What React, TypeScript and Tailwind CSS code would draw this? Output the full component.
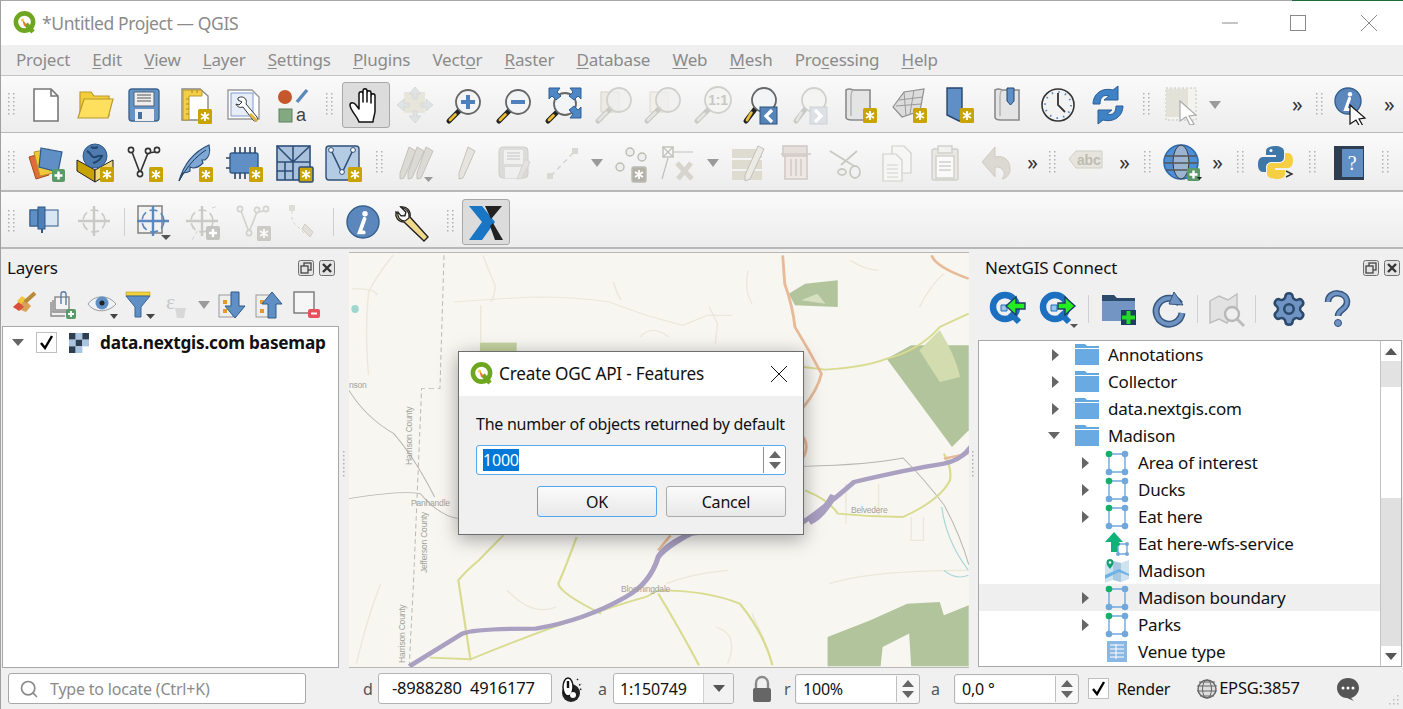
import React from "react";
import { Search, Settings } from "lucide-react";

const Svg = ({ children, w = 40, h = 40 }: { children: React.ReactNode; w?: number; h?: number }) => (
  <svg width={w} height={h} viewBox={`0 0 ${w} ${h}`} className="shrink-0">
    {children}
  </svg>
);

const Gold = ({ x = 23, y = 23, grey = false }: { x?: number; y?: number; grey?: boolean }) => (
  <g>
    <rect x={x} y={y} width={14} height={15} rx={1.5} fill={grey ? "#b4b2a8" : "#c9a400"} />
    <path d={`M${x + 7} ${y + 3}v9M${x + 3} ${y + 5}l8 5M${x + 3} ${y + 10}l8-5`} stroke="#fff" strokeWidth={1.8} />
  </g>
);

const Plus = ({ x = 25, y = 25 }: { x?: number; y?: number }) => (
  <g>
    <rect x={x} y={y} width={13} height={13} rx={2} fill="#5a9a68" />
    <path d={`M${x + 6.5} ${y + 2.5}v8M${x + 2.5} ${y + 6.5}h8`} stroke="#fff" strokeWidth={2.4} />
  </g>
);

const Lens = ({ cx = 24, cy = 17, r = 12, fill = "#f2f4f6", dim = false }: { cx?: number; cy?: number; r?: number; fill?: string; dim?: boolean }) => (
  <g>
    <path d={`M${cx - r * 0.72} ${cy + r * 0.72}L5 36`} stroke={dim ? "#c8c8c4" : "#222"} strokeWidth={5} strokeLinecap="round" />
    <path d={`M${cx - r * 1.05} ${cy + r * 1.05}L6 35`} stroke={dim ? "#e4e4e0" : "#eebf35"} strokeWidth={2.8} strokeLinecap="round" />
    <circle cx={cx} cy={cy} r={r} fill={fill} stroke={dim ? "#d0d0cc" : "#666"} strokeWidth={1.8} />
  </g>
);

const Scroll = () => (
  <g>
    <path d="M6 5c3-2 5-1 7 0h17v30H12c-3 0-6 0-6-3z" fill="#e4e4e4" stroke="#8a8a8a" strokeWidth={1.6} />
    <path d="M13 5c-2 2-2 4-2 6v20" stroke="#b0b0b0" fill="none" strokeWidth={1.4} />
  </g>
);

const QgisLogo = ({ s = 24 }: { s?: number }) => (
  <svg width={s} height={s} viewBox="0 0 24 24" className="shrink-0">
    <circle cx={11.5} cy={11} r={8.6} fill="none" stroke="#6fa61f" strokeWidth={4.6} />
    <path d="M13 13l7 8" stroke="#6fa61f" strokeWidth={4.6} />
    <path d="M9 8l5 6-3 1z" fill="#e8792d" />
    <circle cx={9.5} cy={9} r={1.6} fill="#f4d04a" />
  </svg>
);

const V = ({ c = "#333", dot = "#fff" }: { c?: string; dot?: string }) => (
  <g fill={dot} stroke={c} strokeWidth={1.6}>
    <path d="M7 9l8 21 8-20 7-1" fill="none" />
    <circle cx={6} cy={7} r={2.6} />
    <circle cx={15} cy={31} r={2.6} />
    <circle cx={23} cy={8} r={2.6} />
    <circle cx={32} cy={7} r={2.6} />
  </g>
);

const Cross = ({ c = "#c9c9c6" }: { c?: string }) => (
  <g fill="none" stroke={c}>
    <circle cx={20} cy={19} r={11} strokeWidth={1.6} strokeDasharray="8 4" />
    <path d="M20 4v30M4 19h32" strokeWidth={2.4} />
  </g>
);

const Pencil = ({ x = 0, c = "#dcdad4" }: { x?: number; c?: string }) => (
  <g transform={`translate(${x} 0)`}>
    <path d="M21 4l7 4-12 27-4 1 0-6z" fill={c} stroke="#c4c2bc" />
  </g>
);

const Info = ({ cx = 20, cy = 20, r = 15 }: { cx?: number; cy?: number; r?: number }) => (
  <g>
    <circle cx={cx} cy={cy} r={r} fill="#5c87bd" stroke="#35608f" strokeWidth={1.4} />
    <circle cx={cx + 2} cy={cy - r * 0.52} r={r * 0.17} fill="#fff" />
    <path d={`M${cx + 1.5} ${cy - r * 0.2}l-${r * 0.3} ${r * 0.85}h${r * 0.25}`} stroke="#fff" strokeWidth={r * 0.24} fill="none" strokeLinecap="round" />
  </g>
);

const Wrench = () => (
  <g>
    <path d="M8 5l5 5-1 4-4 0-5-4c-1 5 2 10 8 10l20 19 4-4-18-20c1-6-3-11-9-10z" fill="#f0d98c" stroke="#222" strokeWidth={1.4} />
    <path d="M5 10c-1 5 2 9 7 9l4-3c1-6-3-10-8-11l5 5-1 4-4 0z" fill="#fff" stroke="#222" strokeWidth={1.2} />
  </g>
);

const icons: Record<string, React.ReactNode> = {
  new: <path d="M8 4h17l7 7v25H8z M25 4v7h7" fill="#fff" stroke="#777" strokeWidth={1.6} />,
  open: (
    <g stroke="#b89b2e" strokeWidth={1.2}>
      <path d="M5 7h11l3 4h15v20H5z" fill="#f4cd3c" />
      <path d="M9 14h29l-5 19H3z" fill="#ffdf5e" />
    </g>
  ),
  save: (
    <g>
      <rect x={5} y={4} width={30} height={32} rx={3} fill="#6593c5" stroke="#3d668f" strokeWidth={1.4} />
      <rect x={10} y={7} width={20} height={14} fill="#eee" stroke="#567" />
      <path d="M13 10h14M13 13h14M13 16h14" stroke="#555" />
      <rect x={11} y={24} width={19} height={12} fill="#eee" />
      <rect x={14} y={27} width={4} height={7} fill="#446f9c" />
    </g>
  ),
  layout: (
    <g>
      <path d="M8 4h18l8 7v24H8z" fill="#fff" stroke="#888" strokeWidth={1.4} />
      <path d="M9 5h19v6H15v24H9z" fill="#f4cf45" stroke="#b8982a" />
      <path d="M12 14h3M12 19h3M12 24h3M12 29h3M18 5v3M23 5v3" stroke="#a88a20" />
      <Gold x={24} y={24} />
    </g>
  ),
  manager: (
    <g>
      <path d="M5 5h24l7 7v22H5z" fill="#fff" stroke="#999" strokeWidth={1.4} />
      <rect x={8} y={8} width={22} height={23} fill="#e8eef8" stroke="#7e9ccc" />
      <path d="M15 13c3-2 7-1 8 2 1 2 0 3 0 4l11 13c2 4-2 5-4 3L20 22c-3 1-6 0-7-3l3 1 3-3-4-2z" fill="#fff" stroke="#333" />
      <path d="M27 29l7 7" stroke="#e0b43a" strokeWidth={3} />
    </g>
  ),
  style: (
    <g>
      <circle cx={13} cy={12} r={7} fill="#c6562c" />
      <path d="M25 17L35 5" stroke="#5b87ba" strokeWidth={3.4} />
      <rect x={7} y={24} width={13} height={13} fill="#82a982" stroke="#5d825d" />
      <text x={24} y={36} fontSize={18} fontFamily="'Liberation Sans', sans-serif" fill="#444">a</text>
    </g>
  ),
  move: (
    <g>
      <rect x={9} y={7} width={21} height={21} fill="#e8e6da" />
      <g fill="#dfe3e3" stroke="#d2d6d6" strokeWidth={0.8}>
        <path d="M20 2l6 7h-4v5h-4V9h-4z" />
        <path d="M20 38l6-7h-4v-5h-4v5h-4z" />
        <path d="M2 20l7-6v4h5v4H9v4z" />
        <path d="M38 20l-7-6v4h-5v4h5v4z" />
      </g>
    </g>
  ),
  zin: (
    <g>
      <Lens />
      <path d="M24 10v14M17 17h14" stroke="#4d80bc" strokeWidth={4} />
    </g>
  ),
  zout: (
    <g>
      <Lens />
      <path d="M17 17h14" stroke="#4d80bc" strokeWidth={4} />
    </g>
  ),
  zfull: (
    <g>
      <Lens cx={22} cy={19} r={11} />
      <g fill="#4f86c4" stroke="#2d5f97">
        <path d="M6 3h11l-3 4 4 4-5 4-4-4-3 3z" />
        <path d="M38 3H27l3 4-4 4 5 4 4-4 3 3z" />
        <path d="M38 33H27l3-4-4-4 5-4 4 4 3-3z" />
      </g>
    </g>
  ),
  zsel: (
    <g>
      <rect x={8} y={7} width={18} height={20} fill="#ecebe3" stroke="#d4d3ca" />
      <Lens dim fill="rgba(240,240,240,.7)" cx={26} cy={15} r={12} />
    </g>
  ),
  zlay: (
    <g>
      <rect x={8} y={7} width={18} height={20} fill="#f0efe8" stroke="#dcdbd2" />
      <Lens dim fill="rgba(240,240,240,.7)" cx={26} cy={15} r={12} />
    </g>
  ),
  z11: (
    <g>
      <Lens dim fill="#f4f4f2" cx={26} cy={15} r={13} />
      <text x={26} y={20} textAnchor="middle" fontSize={14} fontWeight={700} fontFamily="'Liberation Sans', sans-serif" fill="#c8c8c4">1:1</text>
    </g>
  ),
  zlast: (
    <g>
      <Lens cx={23} cy={15} r={12} />
      <rect x={19} y={22} width={17} height={17} fill="#5784b8" stroke="#2d4f78" />
      <path d="M31 25l-6 6 6 6" fill="none" stroke="#fff" strokeWidth={3.2} />
    </g>
  ),
  znext: (
    <g>
      <Lens dim fill="#f4f4f2" cx={23} cy={15} r={12} />
      <rect x={19} y={22} width={17} height={17} fill="#dde1e6" stroke="#cdd0d4" />
      <path d="M24 25l6 6-6 6" fill="none" stroke="#fff" strokeWidth={3.2} />
    </g>
  ),
  scrollNew: (
    <g>
      <Scroll />
      <Gold x={23} y={23} />
    </g>
  ),
  map3d: (
    <g>
      <path d="M3 22L14 7l20-3-4 22-18 6z" fill="#dcdcdc" stroke="#8f8f8f" strokeWidth={1.2} />
      <path d="M14 7l2 24M9 15l24-3M6 21l25-2M24 5l-4 24" stroke="#9a9a9a" fill="none" />
      <Gold x={23} y={23} />
    </g>
  ),
  bookNew: (
    <g>
      <path d="M8 3h15v33l-3 0-12-6z" fill="#5f8fc4" stroke="#24476e" strokeWidth={1.4} />
      <Gold x={21} y={23} />
    </g>
  ),
  bookScroll: (
    <g>
      <Scroll />
      <path d="M18 3h7v13l-3.5 4-3.5-4z" fill="#5f8fc4" stroke="#24476e" />
    </g>
  ),
  clock: (
    <g>
      <circle cx={20} cy={20} r={16} fill="#f3f3f3" stroke="#333" strokeWidth={1.6} />
      <circle cx={20} cy={20} r={13} fill="none" stroke="#5e8bc0" strokeWidth={2} strokeDasharray="1.5 5.3" />
      <path d="M20 8v12l7 7" fill="none" stroke="#333" strokeWidth={1.8} />
    </g>
  ),
  refresh: (
    <g fill="#3f83c6" stroke="#2b5f96">
      <path d="M5 19C5 9 14 2 25 5l5-4v14H16l5-4C15 9 12 13 12 19z" />
      <path d="M35 21c0 10-9 17-20 14l-5 4V25h14l-5 4c6 2 9-2 9-8z" />
    </g>
  ),
  selectRect: (
    <g>
      <rect x={3} y={3} width={30} height={32} fill="#f3f3f0" stroke="#c4c4bc" strokeDasharray="2 2" />
      <rect x={3} y={4} width={22} height={28} fill="#e3e2d8" />
      <path d="M17 16l16 14-7 1 5 8-4 1-4-8-6 4z" fill="#fff" stroke="#aaa" strokeWidth={1.2} />
    </g>
  ),
  identify: (
    <g>
      <Info cx={15} cy={16} r={13} />
      <path d="M17 20l15 13-6 1 4 7-3 1-4-7-6 4z" fill="#fff" stroke="#111" strokeWidth={1.2} />
    </g>
  ),
  dsm: (
    <g>
      <path d="M3 14l14-4 6 22-13 4z" fill="#df6e35" stroke="#a8491c" />
      <path d="M8 9l15-3 4 24-13 3z" fill="#f2c83a" stroke="#b8962a" />
      <path d="M15 5l21 4-4 20-19-5z" fill="#5f8fc4" stroke="#2f5a8a" strokeWidth={1.2} />
      <Plus x={26} y={26} />
    </g>
  ),
  gpkg: (
    <g>
      <path d="M2 17l18 10v12L2 28z" fill="#c9a400" stroke="#222" />
      <path d="M38 17L20 27v12l18-11z" fill="#f0d77a" stroke="#222" />
      <circle cx={20} cy={13} r={12} fill="#4f7cb0" stroke="#30598a" />
      <path d="M12 8c4 2 3 4 6 6 3 1 5-2 9-1-2 4-5 6-9 7M16 4c2 1 5 1 7 0" fill="none" stroke="#24466e" strokeWidth={2} />
      <Gold x={25} y={24} />
    </g>
  ),
  shp: (
    <g>
      <V />
      <Gold x={24} y={24} />
    </g>
  ),
  feather: (
    <g>
      <path d="M4 38C8 24 16 10 34 2c2 8-1 13-4 15l-3 0 1 3c-3 3-7 5-10 5l-3-1 0 4c-3 2-6 2-7 2z" fill="#7fa7d6" stroke="#2e4f75" strokeWidth={1.2} />
      <path d="M4 38C12 24 20 14 31 7" stroke="#1f3a5a" fill="none" />
      <Gold x={24} y={24} />
    </g>
  ),
  chip: (
    <g>
      <rect x={6} y={10} width={28} height={20} rx={2} fill="#5f8fc4" stroke="#2f5a8a" strokeWidth={1.4} />
      <path d="M11 4v6M16 4v6M21 4v6M26 4v6M31 4v6M11 30v6M16 30v6M21 30v6M2 15h4M2 25h4" stroke="#2f4460" strokeWidth={1.6} />
      <Gold x={25} y={24} />
    </g>
  ),
  mesh: (
    <g fill="#9db8d8" stroke="#2f4f78" strokeWidth={1.6}>
      <rect x={3} y={3} width={33} height={34} fill="#a9c1dc" />
      <path d="M3 19h33M19 3v34M3 3l16 16M19 3v16M19 19l17-16" fill="none" />
      <path d="M3 28h16M11 19v18" fill="none" />
      <Gold x={25} y={24} />
    </g>
  ),
  vBox: (
    <g>
      <rect x={3} y={3} width={33} height={34} rx={3} fill="#b4cbe4" stroke="#2f4f78" strokeWidth={1.4} />
      <path d="M8 7l11 23 11-23" fill="none" stroke="#2f4f78" strokeWidth={1.6} />
      <g fill="#fff" stroke="#2f4f78">
        <circle cx={8} cy={7} r={2.4} />
        <circle cx={19} cy={29} r={2.4} />
        <circle cx={30} cy={7} r={2.4} />
      </g>
      <Gold x={25} y={24} />
    </g>
  ),
  pencils: (
    <g>
      <Pencil x={-7} />
      <Pencil x={1} />
      <Pencil x={10} />
      <path d="M29 34h9l-4.500 5z" fill="#999" />
    </g>
  ),
  pencil: <Pencil x={2} c="#e6e4de" />,
  saveEdit: (
    <g opacity={0.55}>
      <rect x={5} y={4} width={29} height={31} rx={4} fill="#c9cbc6" stroke="#b0b2ad" />
      <rect x={10} y={7} width={19} height={14} fill="#eee" />
      <path d="M13 10h13M13 13h13M13 16h13" stroke="#999" />
      <rect x={11} y={24} width={16} height={11} fill="#eee" />
      <path d="M31 16l5 3-8 16-5 1z" fill="#d8d5cc" stroke="#bbb" />
    </g>
  ),
  line: (
    <g>
      <path d="M9 33L33 8" stroke="#d6d6d2" strokeWidth={1.6} strokeDasharray="5 4" fill="none" />
      <rect x={5} y={30} width={6} height={6} fill="#d8d8d4" />
      <rect x={30} y={5} width={6} height={6} fill="#d8d8d4" />
    </g>
  ),
  points: (
    <g fill="#eee" stroke="#bcbcb4" strokeWidth={1.4}>
      <circle cx={18} cy={9} r={4} />
      <circle cx={30} cy={14} r={4} />
      <circle cx={8} cy={24} r={4} />
      <Gold x={20} y={24} grey />
    </g>
  ),
  tools: (
    <g stroke="#c0c0ba" fill="none">
      <rect x={4} y={4} width={10} height={10} strokeWidth={1.4} />
      <path d="M4 4l10 10M14 4L4 14M14 9h20M9 15L3 36" strokeWidth={1.2} />
      <path d="M18 20l15 16M32 20L19 36" stroke="#d6d4cc" strokeWidth={5} />
    </g>
  ),
  table: (
    <g>
      <rect x={4} y={6} width={30} height={9} fill="#dedcd0" />
      <rect x={4} y={17} width={30} height={9} fill="#dedcd0" />
      <rect x={4} y={28} width={30} height={9} fill="#dedcd0" />
      <path d="M30 3l6 3-14 30-5 2 0-6z" fill="#eceae4" stroke="#c2c0b8" />
    </g>
  ),
  trash: (
    <g stroke="#d2cac6" fill="#eee8e4" strokeWidth={1.6}>
      <rect x={6} y={3} width={24} height={10} fill="#e6e0dc" />
      <path d="M4 11h30M8 13h22v23H8z" />
      <path d="M14 16v17M19 16v17M24 16v17" fill="none" />
    </g>
  ),
  cut: (
    <g stroke="#c9c9c4" fill="none" strokeWidth={1.8}>
      <path d="M3 8l24 15M30 8L14 22" />
      <ellipse cx={28} cy={29} rx={5} ry={6} />
      <ellipse cx={15} cy={29} rx={4} ry={3} />
    </g>
  ),
  copy: (
    <g stroke="#cfcfca" fill="#f6f6f4" strokeWidth={1.2}>
      <path d="M15 3h12l7 7v20H15z" />
      <path d="M6 11h13l6 6v21H6z" />
      <path d="M10 22h11M10 26h11M10 30h11M10 34h11" fill="none" />
    </g>
  ),
  paste: (
    <g stroke="#cfcfca" fill="#f1f1ee" strokeWidth={1.4}>
      <rect x={6} y={6} width={26} height={31} rx={2} fill="#e9e8e2" />
      <rect x={12} y={3} width={14} height={7} />
      <rect x={10} y={13} width={18} height={22} fill="#fafafa" />
      <path d="M13 19h12M13 23h12M13 27h12" fill="none" />
    </g>
  ),
  undo: <path d="M19 4v10c10-2 15 4 15 12 0 5-3 9-8 10 3-3 3-7 0-10-2-2-4-2-7-2v10L6 19z" fill="#dcd8d2" stroke="#cfcbc5" />,
  abc: (
    <g>
      <path d="M2 16l7-8h26v17H9z" fill="#e6e5dd" stroke="#d0cfc6" />
      <text x={10} y={22} fontSize={14} fontWeight={700} fontFamily="'Liberation Sans', sans-serif" fill="#bdbcb3">abc</text>
    </g>
  ),
  globePlus: (
    <g>
      <circle cx={19} cy={19} r={17} fill="#4f8fd6" stroke="#2e6cb2" strokeWidth={1.6} />
      <ellipse cx={19} cy={19} rx={8} ry={17} fill="#9ab4d2" stroke="#3a3a3a" />
      <path d="M3 13h32M2 20h34M4 27h30" stroke="#555" strokeWidth={1.4} />
      <Plus x={25} y={25} />
      <path d="M35 34h5l-2.500 3z" fill="#222" />
    </g>
  ),
  python: (
    <g>
      <path d="M19 3c-6 0-9 2-9 5v4h10v2H7c-4 0-5 4-5 8s2 7 5 7h3v-5c0-3 3-5 6-5h7c3 0 5-2 5-5V8c0-3-4-5-9-5z" fill="#3f77a8" />
      <path d="M20 36c6 0 9-2 9-5v-4H19v-2h13c4 0 5-4 5-8s-2-7-5-7h-3v5c0 3-3 5-6 5h-7c-3 0-5 2-5 5v6c0 3 4 5 9 5z" fill="#f6cf45" />
      <circle cx={15} cy={7.500} r={1.500} fill="#fff" />
      <path d="M30 28l6 3-6 3" fill="none" stroke="#333" strokeWidth={1.4} />
    </g>
  ),
  help: (
    <g>
      <rect x={5} y={3} width={30} height={34} fill="#2c3e50" />
      <rect x={13} y={6} width={21} height={28} fill="#5f8fc4" />
      <text x={23} y={27} textAnchor="middle" fontSize={20} fontFamily="'Liberation Serif', serif" fill="#fff">?</text>
    </g>
  ),
  panels: (
    <g stroke="#2f5a8a">
      <rect x={4} y={8} width={28} height={16} fill="#d9e6f4" />
      <rect x={4} y={8} width={8} height={16} fill="#5f8fc4" />
      <rect x={12} y={5} width={7} height={22} fill="#4f7fb5" />
      <path d="M16 27v4" strokeWidth={2} />
    </g>
  ),
  crossDim: <Cross />,
  crossBox: (
    <g>
      <rect x={5} y={4} width={24} height={27} fill="#f2f2f2" stroke="#888" strokeWidth={1.6} />
      <Cross c="#5a87bd" />
      <path d="M28 33h10l-5 5z" fill="#555" />
    </g>
  ),
  crossPlus: (
    <g>
      <Cross />
      <path d="M10 38l6-10M30 6l6-2" stroke="#d4d4d0" strokeDasharray="4 3" />
      <rect x={24} y={24} width={14} height={14} rx={2} fill="#c4c4c0" />
      <path d="M31 27v8M27 31h8" stroke="#fff" strokeWidth={2.4} />
    </g>
  ),
  vDim: (
    <g opacity={0.6}>
      <V c="#bcbcb6" dot="#f4f4f4" />
      <Gold x={23} y={24} grey />
    </g>
  ),
  path: (
    <g>
      <rect x={6} y={3} width={6} height={6} fill="#dcdcd8" />
      <path d="M9 9v10l14 14" stroke="#d4d4d0" strokeDasharray="3 3" fill="none" />
      <path d="M22 22l8 8 -3 5-8-8z" fill="#e2e0d8" stroke="#cfcdc5" />
    </g>
  ),
  info: <Info cx={20} cy={20} r={16} />,
  wrench: <Wrench />,
  x: (
    <g>
      <path d="M3 4h13l13 16-13 18H3l13-18z" fill="#1976c4" />
      <path d="M19 4h17L26 16l-1 1zM24 24l3-3 10 17H29z" fill="#222" />
    </g>
  ),
  hand: (
    <path
      d="M13 37C11 31 4 25 4 20c0-3 4-3 6 0l3 4V9c0-3 4-3 4 0v8V6c0-3 4-3 4 0v11V8c0-3 4-3 4 0v10-7c0-3 4-3 4 0v15c0 4-2 7-2 11z"
      fill="#fff"
      stroke="#111"
      strokeWidth={1.5}
      strokeLinejoin="round"
    />
  ),
};

const Icon = ({ name }: { name: string }) => <Svg>{icons[name]}</Svg>;

const Arrow = () => (
  <svg width={12} height={8} viewBox="0 0 12 8" className="shrink-0">
    <path d="M0 0h12L6 8z" fill="#9a9a9a" />
  </svg>
);

const Grip = ({ h = 26 }: { h?: number }) => (
  <svg width={7} height={h} viewBox={`0 0 7 ${h}`} className="shrink-0">
    {Array.from({ length: Math.floor(h / 4) }).map((_, i) => (
      <g key={i} fill="#b0b0b0">
        <rect x={0} y={i * 4 + 1} width={1.5} height={1.5} />
        <rect x={5} y={i * 4 + 1} width={1.5} height={1.5} />
      </g>
    ))}
  </svg>
);

const SplitGrip = () => (
  <svg width={3} height={26} viewBox="0 0 3 26">
    {Array.from({ length: 7 }).map((_, i) => (
      <rect key={i} x={0} y={i * 4} width={1.5} height={1.5} fill="#b0b0b0" />
    ))}
  </svg>
);

type Item = { t: "i" | "g" | "c" | "a" | "s" | "p" | "b"; w: number; n?: string };

const I = (n: string, w = 49.5): Item => ({ t: "i", n, w });
const G = (w: number): Item => ({ t: "g", w });
const C = (w: number): Item => ({ t: "c", w });
const A = (w: number): Item => ({ t: "a", w });
const S = (w: number): Item => ({ t: "s", w });
const P = (w: number): Item => ({ t: "p", w });
const B = (n: string): Item => ({ t: "b", w: 48, n });

const row1: Item[] = [
  G(20), I("new", 49.3), I("open", 49.3), I("save", 49.3), I("layout", 49.3), I("manager", 49.3), I("style", 49.3),
  G(25), B("hand"),
  I("move"), I("zin"), I("zout"), I("zfull"), I("zsel"), I("zlay"), I("z11"), I("zlast"), I("znext"),
  I("scrollNew"), I("map3d"), I("bookNew"), I("bookScroll"), I("clock"), I("refresh"),
  G(29), I("selectRect", 44), A(20), S(64), C(16), G(28), I("identify", 40), C(32),
];

const row2: Item[] = [
  G(20), I("dsm", 49.6), I("gpkg", 49.6), I("shp", 49.6), I("feather", 49.6), I("chip", 49.6), I("mesh", 49.6), I("vBox", 49.6),
  G(22), I("pencils", 49.6), I("pencil", 49.6), I("saveEdit", 49.6), I("line", 46), A(24), I("points", 46), I("tools", 48), A(20),
  I("table", 49.6), I("trash", 49.6), I("cut", 49.6), I("copy", 49.6), I("paste", 49.6), I("undo", 49.6),
  C(24), G(16), I("abc", 52), C(24), G(21), I("globePlus", 48), C(24), G(21), I("python", 50), G(23), I("help", 50), G(24),
];

const row3: Item[] = [
  G(20), I("panels", 50), I("crossDim", 46), P(14), I("crossBox", 44), I("crossPlus", 54), I("vDim", 50), I("path", 48), P(12),
  I("info", 48), I("wrench", 52), G(23), B("x"),
];

const ToolRow = ({ items, cls }: { items: Item[]; cls: string }) => (
  <div className={`flex items-center bg-gradient-to-b from-[#fafafa] to-[#ededed] ${cls}`}>
    {items.map((it, i) => {
      const style = { width: it.w };
      if (it.t === "i")
        return (
          <div key={i} style={style} className="flex justify-center shrink-0">
            <Icon name={it.n!} />
          </div>
        );
      if (it.t === "g")
        return (
          <div key={i} style={style} className="flex justify-center shrink-0">
            <Grip />
          </div>
        );
      if (it.t === "c")
        return (
          <div key={i} style={style} className="flex justify-center shrink-0 text-[#333] text-[21px] leading-none">
            »
          </div>
        );
      if (it.t === "a")
        return (
          <div key={i} style={style} className="flex justify-center shrink-0">
            <Arrow />
          </div>
        );
      if (it.t === "p")
        return (
          <div key={i} style={style} className="flex justify-center shrink-0">
            <div className="w-px h-[28px] bg-[#cfcfcf]" />
          </div>
        );
      if (it.t === "b")
        return (
          <div
            key={i}
            style={style}
            className="flex items-center justify-center shrink-0 h-[46px] rounded-[3px] border border-[#a8a8a8] bg-[#dcdcdc]"
          >
            <Icon name={it.n!} />
          </div>
        );
      return <div key={i} style={style} className="shrink-0" />;
    })}
  </div>
);

const DockButtons = () => (
  <div className="flex gap-[5px]">
    {[0, 1].map((k) => (
      <svg key={k} width={16} height={16} viewBox="0 0 16 16">
        <rect x={0.5} y={0.5} width={15} height={15} rx={2} fill="#e4e4e4" stroke="#707070" />
        {k === 0 ? (
          <g fill="none" stroke="#444" strokeWidth={1.3}>
            <rect x={6} y={3} width={7} height={7} />
            <rect x={3} y={6} width={7} height={7} fill="#e4e4e4" />
          </g>
        ) : (
          <path d="M4 4l8 8M12 4l-8 8" stroke="#333" strokeWidth={2.4} />
        )}
      </svg>
    ))}
  </div>
);

const layerIcons: Record<string, React.ReactNode> = {
  brush: (
    <g>
      <path d="M3 18l10-9 8 8-5 6z" fill="#d9a05a" />
      <path d="M3 18l6-5 5 5-5 4z" fill="#d94f3a" />
      <path d="M7 12l5-5 4 3-5 5z" fill="#f2c83a" />
      <path d="M15 13L25 4" stroke="#b88a3c" strokeWidth={4} />
    </g>
  ),
  group: (
    <g fill="none" stroke="#888" strokeWidth={1.4}>
      <rect x={7} y={8} width={14} height={13} fill="#f4f4f4" />
      <path d="M3 13v14h14M5 11v12h14" />
      <path d="M13 15V5c0-3 5-3 5 0v11" stroke="#5a7da8" />
      <rect x={18} y={20} width={10} height={10} rx={2} fill="#5a9a68" stroke="none" />
      <path d="M23 22v6M20 25h6" stroke="#fff" strokeWidth={1.8} />
    </g>
  ),
  eye: (
    <g>
      <path d="M2 15c6-9 20-10 28 0-8 9-22 9-28 0z" fill="#eef2f6" stroke="#9a9a9a" />
      <circle cx={16} cy={14} r={6.500} fill="#5f8fc4" />
      <circle cx={16} cy={14} r={2.500} fill="#222" />
      <path d="M24 25h8l-4 5z" fill="#444" />
    </g>
  ),
  filter: (
    <g>
      <rect x={2} y={3} width={24} height={4} fill="#f2d23a" stroke="#b89a20" strokeWidth={0.6} />
      <path d="M2 7h24L17 18v10l-6 0V18z" fill="#5f8fc4" stroke="#3a6595" />
      <path d="M22 25h9l-4.500 5z" fill="#444" />
    </g>
  ),
  eps: (
    <g>
      <text x={6} y={20} fontSize={22} fontFamily="'Liberation Serif', serif" fill="#c6c6c6">ε</text>
      <path d="M15 19h11l-2 10h-7z" fill="#d8d8d8" />
    </g>
  ),
  down: (
    <g>
      <rect x={2} y={6} width={14} height={22} fill="#eee" stroke="#999" />
      <rect x={6} y={11} width={4} height={4} fill="#e8962e" />
      <rect x={6} y={20} width={4} height={4} fill="#e8962e" />
      <path d="M14 3h8v14h6L18 29 8 17h6z" fill="#5f8fc4" stroke="#2f5a8a" />
    </g>
  ),
  up: (
    <g>
      <rect x={2} y={6} width={14} height={22} fill="#eee" stroke="#999" />
      <rect x={6} y={11} width={4} height={4} fill="#e8962e" />
      <rect x={6} y={20} width={4} height={4} fill="#e8962e" />
      <path d="M14 29h8V15h6L18 3 8 15h6z" fill="#5f8fc4" stroke="#2f5a8a" />
    </g>
  ),
  remove: (
    <g>
      <rect x={3} y={3} width={20} height={21} fill="#f6f6f6" stroke="#777" strokeWidth={1.4} />
      <rect x={17} y={20} width={12} height={9} rx={2} fill="#e8505b" />
      <path d="M20 24.500h6" stroke="#fff" strokeWidth={2} />
    </g>
  ),
};

const LayersBar = () => {
  const list: [string, number][] = [
    ["brush", 38],
    ["group", 38],
    ["eye", 38],
    ["filter", 38],
    ["eps", 34],
    ["arrow", 22],
    ["down", 36],
    ["up", 37],
    ["remove", 37],
  ];
  return (
    <div className="flex items-center h-[42px] pl-[6px]">
      {list.map(([n, w]) => (
        <div key={n} style={{ width: w }} className="flex justify-center shrink-0">
          {n === "arrow" ? <Arrow /> : <Svg w={32} h={32}>{layerIcons[n]}</Svg>}
        </div>
      ))}
    </div>
  );
};

const TreeArrow = ({ open }: { open?: boolean }) =>
  open ? (
    <svg width={12} height={8} viewBox="0 0 12 8" className="shrink-0">
      <path d="M0 0h12L6 7z" fill="#666" />
    </svg>
  ) : (
    <svg width={8} height={12} viewBox="0 0 8 12" className="shrink-0">
      <path d="M0 0v12l7-6z" fill="#666" />
    </svg>
  );

const Folder = () => (
  <svg width={24} height={21} viewBox="0 0 24 21" className="shrink-0">
    <path d="M0 0h10l2 2h12v2H0z" fill="#64a8e0" />
    <path d="M0 5h24v16H0z" fill="#6aaae2" />
  </svg>
);

const VectorIcon = () => (
  <svg width={24} height={26} viewBox="0 0 24 26" className="shrink-0">
    <path d="M4 4h16v18H4z" fill="none" stroke="#6fa8dc" strokeWidth={1.4} />
    <circle cx={4} cy={4} r={3.300} fill="#10b26a" />
    <circle cx={20} cy={4} r={3.300} fill="#6fa8dc" />
    <circle cx={4} cy={22} r={3.300} fill="#6fa8dc" />
    <circle cx={20} cy={22} r={3.300} fill="#6fa8dc" />
  </svg>
);

const WfsIcon = () => (
  <svg width={24} height={24} viewBox="0 0 24 24" className="shrink-0">
    <path d="M9 0l9 10h-5v10H6V10H0z" fill="#10b27a" />
    <path d="M13 12h9v10h-9z" fill="#fff" stroke="#6fa8dc" strokeWidth={1.4} />
    <circle cx={13} cy={12} r={2} fill="#10b26a" />
    <circle cx={22} cy={12} r={2} fill="#6fa8dc" />
    <circle cx={13} cy={22} r={2} fill="#6fa8dc" />
    <circle cx={22} cy={22} r={2} fill="#6fa8dc" />
  </svg>
);

const MapIcon = () => (
  <svg width={24} height={24} viewBox="0 0 24 24" className="shrink-0">
    <path d="M0 5l8-3 8 2 8-3v19l-8 3-8-2-8 3z" fill="#cfe2f0" />
    <path d="M8 2l8 2v19l-8-2z" fill="#a8c8e2" />
    <path d="M0 16l14-6 10 5v2L14 13 0 20z" fill="#6fb3e4" />
    <path d="M5 0a3.500 3.500 0 0 1 3.500 3.500C8.500 6 5 10 5 10S1.500 6 1.500 3.500A3.500 3.500 0 0 1 5 0z" fill="#10a070" />
    <circle cx={5} cy={3.500} r={1.300} fill="#fff" />
  </svg>
);

const TableIcon = () => (
  <svg width={20} height={23} viewBox="0 0 20 23" className="shrink-0">
    <rect x={0} y={1} width={20} height={21} fill="#8ab8e4" />
    <path d="M3 5h14M3 9h14M3 13h14M3 17h14M9 4v15" stroke="#fff" />
  </svg>
);

const treeRows: { label: string; level: number; icon: React.ReactNode; arrow?: boolean; open?: boolean; hi?: boolean }[] = [
  { label: "Annotations", level: 0, icon: <Folder />, arrow: true },
  { label: "Collector", level: 0, icon: <Folder />, arrow: true },
  { label: "data.nextgis.com", level: 0, icon: <Folder />, arrow: true },
  { label: "Madison", level: 0, icon: <Folder />, arrow: true, open: true },
  { label: "Area of interest", level: 1, icon: <VectorIcon />, arrow: true },
  { label: "Ducks", level: 1, icon: <VectorIcon />, arrow: true },
  { label: "Eat here", level: 1, icon: <VectorIcon />, arrow: true },
  { label: "Eat here-wfs-service", level: 1, icon: <WfsIcon /> },
  { label: "Madison", level: 1, icon: <MapIcon /> },
  { label: "Madison boundary", level: 1, icon: <VectorIcon />, arrow: true, hi: true },
  { label: "Parks", level: 1, icon: <VectorIcon />, arrow: true },
  { label: "Venue type", level: 1, icon: <TableIcon /> },
];

const ConnIcon = ({ out }: { out?: boolean }) => (
  <Svg w={40} h={40}>
    <circle cx={17} cy={18} r={12} fill="none" stroke="#1d6fc0" strokeWidth={6.500} />
    <path d="M22 24l9 9" stroke="#1d6fc0" strokeWidth={6} />
    <path d="M13 16h6v6h-6z" fill="#9ec4e8" stroke="#1d6fc0" />
    {out ? (
      <path d="M20 14h7V8l10 9-10 9v-6h-7z" fill="#22ee22" stroke="#1f3f60" strokeWidth={1.4} />
    ) : (
      <path d="M37 14h-9V8l-10 9 10 9v-6h9z" fill="#22ee22" stroke="#1f3f60" strokeWidth={1.4} />
    )}
    {out && <path d="M32 35h8l-4 4z" fill="#555" />}
  </Svg>
);

const ConnectBar = () => (
  <div className="flex items-center h-[48px] pl-[11px] pt-[2px]">
    <div className="w-[40px] mr-[10px]"><ConnIcon /></div>
    <div className="w-[40px]"><ConnIcon out /></div>
    <div className="w-px h-[28px] bg-[#d0d0d0] ml-[10px] mr-[10px]" />
    <Svg w={40} h={40}>
      <path d="M3 6h12l3 3h18v4H3z" fill="#2c4a6c" />
      <path d="M3 12h33v20H3z" fill="#7395c4" />
      <rect x={22} y={21} width={15} height={15} fill="#1f3f60" />
      <path d="M29.500 22v13M23 28.500h13" stroke="#22dd22" strokeWidth={4} />
    </Svg>
    <div className="w-[9px]" />
    <Svg w={40} h={40}>
      <path d="M32 15A13 13 0 1 0 34 24" fill="none" stroke="#34567f" strokeWidth={7} />
      <path d="M32 15A13 13 0 1 0 34 24" fill="none" stroke="#6f94c4" strokeWidth={4} />
      <path d="M26 3l9 13-14-1z" fill="#6f94c4" stroke="#34567f" />
    </Svg>
    <div className="w-[9px]" />
    <div className="w-px h-[28px] bg-[#d0d0d0] mr-[-6px]" />
    <div className="w-[15px]" />
    <Svg w={40} h={40}>
      <path d="M3 12l9-5 9 4 9-6v14l-6 8-4 7-8-4-9 4z" fill="#e2e2e2" stroke="#bdbdbd" strokeWidth={1.4} />
      <circle cx={25} cy={25} r={7} fill="#efefef" stroke="#b8b8b8" strokeWidth={2.4} />
      <path d="M30 30l7 7" stroke="#bdbdbd" strokeWidth={3} />
    </Svg>
    <div className="w-[8px]" />
    <div className="w-px h-[28px] bg-[#d0d0d0]" />
    <div className="w-[14px]" />
    <Settings size={38} fill="#6f94c4" stroke="#2c4a6c" strokeWidth={1.6} />
    <div className="w-[9px]" />
    <Svg w={40} h={40}>
      <path d="M11 13c0-12 19-11 19 0 0 8-9 7-9 14" fill="none" stroke="#34567f" strokeWidth={6.500} />
      <path d="M11 13c0-12 19-11 19 0 0 8-9 7-9 14" fill="none" stroke="#6f94c4" strokeWidth={3.500} />
      <circle cx={21} cy={34} r={3.500} fill="#6f94c4" stroke="#34567f" />
    </Svg>
  </div>
);

const MapView = () => (
  <svg viewBox="0 0 620 414" width={620} height={414} className="block bg-[#f7f6f1]">
    <g transform="translate(-9 -2.670) scale(.408 .3333)" fill="none">
      <path d="M1100 130l40-30 80-10v80l-105-5z" fill="#b2c49c" />
      <path d="M1130 150l40-20 20 30z" fill="#d6dfc0" />
      <path d="M1340 325l60-40h141v255l-41 50z" fill="#b2c49c" />
      <path d="M1420 300l50-60q40 80 50 140l-50 15z" fill="#d2dcae" />
      <path d="M1195 1248v-88l105-50 90-50 80-5 10 40 61-30v183h-141l-5-98-65 40-5 58z" fill="#b2c49c" />
      <rect x={343} y={277} width={90} height={40} fill="#c4d29f" />
      <ellipse cx={37} cy={176} rx={9} ry={12} fill="#9ed6d0" />
      <g stroke="#ebe8da" strokeWidth={3.500}>
        <path d="M130 15q-40 60-60 110-10 120 0 250" />
        <path d="M30 115q60 0 60 20M345 165v110M280 155q100-10 200-15 100 0 180 15l90 40 90 30 60-30 60 0" />
        <path d="M350 15q20 60 30 90 0 30-10 50M670 95q10 40 20 55M905 170l20 50-5 60M735 260q30-40 70 0" />
        <path d="M1250 30q40 30 70 30M1000 60q-10 60 10 100M1420 170q30-70 60-100" />
        <path d="M1200 1000q100-40 340-40M800 1000q60-30 150-40M100 1000q-30 90-60 240M410 1020q60 80 120 50" />
        <path d="M1240 700v120M1320 700v100M1400 800v70l30 0v-70M1010 1090l30 80M920 1130q60 20 30 110" />
      </g>
      <g stroke="#a8a5a0" strokeWidth={2.500} opacity={0.8}>
        <path d="M22 745q130-25 175-15 50 70 95 75" />
        <path d="M22 420q40 80 110 130 50 70 100 190" />
        <path d="M1136 648q165-5 244-25 50 60 100 140 40 90 61 180" />
      </g>
      <path d="M1475 770q10 100 65 190M1480 960q30 30 60 15" stroke="#a8d8d8" strokeWidth={3} />
      <path d="M255 15l-10 400h-45l-20 585-10 240" stroke="#bcbab2" strokeWidth={2.500} strokeDasharray="14 9" />
      <g stroke="#d9dc90" strokeWidth={5.500}>
        <path d="M320 1230L290 990q20-30 50-60l60-75M580 860q-30 100-45 140 5 30 105 90" />
        <path d="M220 1222l100 5q180-90 320-145 60-25 110-42l30-20q120 0 200 40 60 90 80 185M780 1030q50 100 100 215" />
        <path d="M1136 350l54 8q100-8 150-33 80-25 130-95l71-40M1140 720q60 30 80 70 80 10 160 10 90-50 115-110 5-40-15-80" />
      </g>
      <g stroke="#e8ba98" strokeWidth={7}>
        <path d="M1085 15l5 85q20 70 25 130 35 70 65 140-10 50-44 100M1450 15q10 35 91 70M1136 560q14 30 0 60M780 900l30-45M1480 625l60-15" />
      </g>
      <path d="M170 1248l130-98q30-15 180-15 120-25 220-95 60-40 80-120 20-30 80-70l276-35q64-55 124-120 140-40 220-55 60-15 81-85" stroke="#a9a0c2" strokeWidth={13} />
      <path d="M1150 815q30-15 60-80" stroke="#a9a0c2" strokeWidth={18} />
      <path d="M860 850q-60 30-80 70" stroke="#a9a0c2" strokeWidth={14} />
    </g>
    <g fontFamily="'Liberation Sans', sans-serif" fontSize={8.500} fill="#a3a39b">
      <text x={0} y={135}>nson</text>
      <text x={62} y={253}>Panhandle</text>
      <text x={502} y={260}>Belvedere</text>
      <text x={272} y={339}>Bloomingdale</text>
      <text transform="translate(63 212) rotate(-90)">Harrison County</text>
      <text transform="translate(78 320) rotate(-90)">Jefferson County</text>
      <text transform="translate(56 410) rotate(-90)">Harrison County</text>
    </g>
  </svg>
);

const Spin = ({ children, w }: { children: React.ReactNode; w: number }) => (
  <div style={{ width: w }} className="flex items-center h-[30px] bg-[#f7f7f7] border border-[#b4b4b4] rounded-[3px] shrink-0">
    <div className="flex-1 pl-[6px] bg-white h-[26px] flex items-center ml-px text-[16px] text-[#111]">{children}</div>
    <div className="w-px h-[26px] bg-[#c0c0c0]" />
    <div className="w-[22px] flex flex-col items-center gap-[4px]">
      <svg width={12} height={7} viewBox="0 0 12 7"><path d="M0 7h12L6 0z" fill="#666" /></svg>
      <svg width={12} height={7} viewBox="0 0 12 7"><path d="M0 0h12L6 7z" fill="#666" /></svg>
    </div>
  </div>
);

const Check = () => (
  <div className="w-[21px] h-[21px] bg-white border border-[#c0c0c0] flex items-center justify-center shrink-0">
    <svg width={15} height={15} viewBox="0 0 15 15">
      <path d="M2 8l4 5 7-12" fill="none" stroke="#000" strokeWidth={2.400} />
    </svg>
  </div>
);

const menu: [string, string, string][] = [
  ["", "", "Project"],
  ["", "E", "dit"],
  ["", "V", "iew"],
  ["", "L", "ayer"],
  ["", "S", "ettings"],
  ["", "P", "lugins"],
  ["Vect", "o", "r"],
  ["", "R", "aster"],
  ["", "D", "atabase"],
  ["", "W", "eb"],
  ["", "M", "esh"],
  ["Pro", "c", "essing"],
  ["", "H", "elp"],
];

export default function App() {
  return (
    <div className="relative w-[1403px] h-[709px] overflow-hidden bg-[#f0f0f0] font-['Noto_Sans','Open_Sans',sans-serif] text-[#111] tracking-[-0.2px] border-l border-[#a0a0a0]">
      {/* title bar */}
      <div className="h-[45px] bg-white border-t border-[#a8a8a8] flex items-center pl-[12px] relative">
        <QgisLogo s={24} />
        <span className="ml-[5px] text-[17.500px] tracking-[-0.4px] text-[#8b8b8b]">*Untitled Project — QGIS</span>
        <div className="ml-auto flex items-center text-[#777]">
          <svg width={16} height={2} viewBox="0 0 16 2" className="mr-[52px]"><path d="M0 1h16" stroke="#8a8a8a" /></svg>
          <svg width={16} height={16} viewBox="0 0 16 16" className="mr-[55px]"><rect x={0.5} y={0.5} width={15} height={15} fill="none" stroke="#8a8a8a" /></svg>
          <svg width={16} height={16} viewBox="0 0 16 16" className="mr-[26px]"><path d="M0 0l16 16M16 0L0 16" stroke="#8a8a8a" /></svg>
        </div>
        <div className="absolute -top-px right-0 w-[111px] h-px bg-[#1e6b3a]" />
      </div>

      {/* menu */}
      <div className="h-[30px] bg-[#efefef] flex items-center gap-[22.200px] pl-[15px] text-[17px] text-[#8b8b8b]">
        {menu.map(([a, b, c]) => (
          <span key={a + b + c}>
            {a}
            <span className="underline underline-offset-2">{b}</span>
            {c}
          </span>
        ))}
      </div>

      {/* toolbars */}
      <ToolRow items={row1} cls="h-[58px] border-t border-[#c4c4c4] border-b border-b-[#b8b8b8] pt-[1px]" />
      <ToolRow items={row2} cls="h-[59px] border-b-2 border-[#b8b8b8] pt-[2px]" />
      <ToolRow items={row3} cls="h-[57px] border-b-2 border-[#b8b8b8] pt-[4px]" />

      {/* main */}
      <div className="flex h-[419px]">
        <div className="w-[338px] shrink-0 flex flex-col">
          <div className="h-[35px] flex items-center justify-between pl-[6px] pr-[4px] pt-[3px]">
            <span className="text-[17px]">Layers</span>
            <DockButtons />
          </div>
          <LayersBar />
          <div className="flex-1 bg-white border border-[#a8a8a8] ml-px">
            <div className="flex items-center h-[29px] pt-[2px] pl-[9px]">
              <TreeArrow open />
              <div className="ml-[12px]"><Check /></div>
              <svg width={20} height={20} viewBox="0 0 3 3" className="ml-[12px] shrink-0">
                <rect x={0} y={0} width={1} height={1} fill="#2c3e50" />
                <rect x={1} y={0} width={1} height={1} fill="#a8c4e0" />
                <rect x={2} y={0} width={1} height={1} fill="#2c3e50" />
                <rect x={0} y={1} width={1} height={1} fill="#a8c4e0" />
                <rect x={1} y={1} width={1} height={1} fill="#2c3e50" />
                <rect x={2} y={1} width={1} height={1} fill="#a8c4e0" />
                <rect x={0} y={2} width={1} height={1} fill="#2c3e50" />
                <rect x={1} y={2} width={1} height={1} fill="#a8c4e0" />
              </svg>
              <span className="ml-[11px] text-[17.200px] font-bold">data.nextgis.com basemap</span>
            </div>
          </div>
        </div>
        <div className="w-[10px] shrink-0 flex items-center justify-center pl-[1px] pt-[10px]">
          <SplitGrip />
        </div>
        <div className="shrink-0 pt-[3px] h-[418px]">
          <div className="border-y border-[#b8b8b8]">
            <MapView />
          </div>
        </div>
        <div className="w-[8px] shrink-0 flex items-center justify-center pl-[1px] pt-[10px]">
          <SplitGrip />
        </div>
        <div className="flex-1 flex flex-col pr-[1px] min-w-0">
          <div className="h-[35px] flex items-center justify-between pl-[8px] pr-[2px] pt-[3px]">
            <span className="text-[17px]">NextGIS Connect</span>
            <DockButtons />
          </div>
          <ConnectBar />
          <div className="ml-[1px] h-[327px] mt-[8px] bg-white border border-[#a8a8a8] flex overflow-hidden">
            <div className="flex-1 min-w-0">
              {treeRows.map((r, i) => (
                <div key={i} className={`flex items-center h-[27px] ${r.hi ? "bg-[#efefef]" : ""}`}>
                  <div className={`${r.level === 0 ? "w-[96px]" : "w-[126px]"} flex justify-end items-center pr-[15px] shrink-0`}>
                    {r.arrow ? <TreeArrow open={r.open} /> : null}
                  </div>
                  <div className="w-[24px] flex justify-center shrink-0">{r.icon}</div>
                  <span className="ml-[9px] text-[17px] whitespace-nowrap">{r.label}</span>
                </div>
              ))}
            </div>
            <div className="w-[21px] shrink-0 border-l border-[#c4c4c4] flex flex-col">
              <div className="h-[20px] flex items-center justify-center bg-white">
                <svg width={12} height={7} viewBox="0 0 12 7"><path d="M0 7h12L6 0z" fill="#555" /></svg>
              </div>
              <div className="h-[26px] bg-[#e2e2e2]" />
              <div className="h-[111px] bg-white" />
              <div className="flex-1 bg-[#e0e0e0]" />
              <div className="h-[20px] flex items-center justify-center bg-white">
                <svg width={12} height={7} viewBox="0 0 12 7"><path d="M0 0h12L6 7z" fill="#555" /></svg>
              </div>
            </div>
          </div>
        </div>
      </div>

      {/* status bar */}
      <div className="h-[41px] flex items-center text-[16px]">
        <div className="ml-[7px] w-[298px] h-[31px] bg-white border border-[#a8a8a8] rounded-[3px] flex items-center pl-[10px] shrink-0">
          <Search size={20} stroke="#8a8a8a" strokeWidth={2} />
          <span className="ml-[11px] text-[#8b8b8b]">Type to locate (Ctrl+K)</span>
        </div>
        <span className="ml-[57px] w-[10px] text-[#555]">d</span>
        <div className="ml-[5px] w-[174px] h-[31px] bg-white border border-[#b4b4b4] rounded-[3px] flex items-center pl-[13px] shrink-0 whitespace-nowrap text-[16.500px]">
          -8988280&nbsp; 4916177
        </div>
        <div className="ml-[7px] shrink-0">
          <svg width={24} height={28} viewBox="0 0 24 28">
            <ellipse cx={12} cy={18} rx={9} ry={9} fill="#222" />
            <ellipse cx={9} cy={12} rx={5} ry={9} fill="#fff" stroke="#111" strokeWidth={1.4} />
            <path d="M9 6v7" stroke="#111" strokeWidth={2.400} />
            <circle cx={14} cy={20} r={3} fill="#fff" />
            <path d="M18 5l2-2M20 10l3-1M21 14l2 1" stroke="#222" strokeWidth={1.4} strokeDasharray="1.500 1.500" />
          </svg>
        </div>
        <span className="ml-[15px] w-[10px] text-[#555]">a</span>
        <div className="ml-[5px] w-[121px] h-[31px] bg-white border border-[#b4b4b4] rounded-[3px] flex items-center pl-[6px] shrink-0 relative">
          1:150749
          <div className="absolute right-0 top-0 bottom-0 w-[30px] bg-[#f2f2f2] border-l border-[#d0d0d0] rounded-r-[3px] flex items-center justify-center">
            <svg width={12} height={7} viewBox="0 0 12 7"><path d="M0 0h12L6 7z" fill="#555" /></svg>
          </div>
        </div>
        <div className="ml-[18px] shrink-0">
          <svg width={20} height={28} viewBox="0 0 20 28">
            <path d="M4 14V8a6 6 0 0 1 12 0v6" fill="none" stroke="#8a8a8a" strokeWidth={2.400} />
            <rect x={1} y={13} width={18} height={14} rx={2} fill="#666" />
          </svg>
        </div>
        <span className="ml-[12px] w-[8px] text-[#555]">r</span>
        <div className="ml-[3px]">
          <Spin w={125}>100%</Spin>
        </div>
        <span className="ml-[11px] w-[10px] text-[#555]">a</span>
        <div className="ml-[13px]">
          <Spin w={125}>0,0 °</Spin>
        </div>
        <div className="ml-[9px]"><Check /></div>
        <span className="ml-[8px]">Render</span>
        <div className="ml-[26px] shrink-0">
          <svg width={22} height={22} viewBox="0 0 22 22">
            <circle cx={11} cy={11} r={9} fill="#ddd" stroke="#666" strokeWidth={1.4} />
            <ellipse cx={11} cy={11} rx={4.500} ry={9} fill="none" stroke="#666" />
            <path d="M1 8h20M1 13h20M3 4h16M4 18h14" stroke="#666" />
          </svg>
        </div>
        <span className="ml-[1px] text-[16.500px]">EPSG:3857</span>
        <div className="ml-[35px] shrink-0">
          <svg width={26} height={26} viewBox="0 0 26 26">
            <path d="M13 2c6 0 11 4 11 10 0 5-4 9-8 10l3 3-7-3C6 22 2 17 2 12 2 6 7 2 13 2z" fill="#555" />
            <circle cx={8} cy={12} r={1.500} fill="#fff" />
            <circle cx={13} cy={12} r={1.500} fill="#fff" />
            <circle cx={18} cy={12} r={1.500} fill="#fff" />
          </svg>
        </div>
      </div>

      {/* size grip */}
      <svg width={14} height={14} viewBox="0 0 14 14" className="absolute right-[2px] bottom-[2px]">
        <g fill="#bbb">
          <rect x={10} y={2} width={1.500} height={1.500} />
          <rect x={6} y={6} width={1.500} height={1.500} />
          <rect x={10} y={6} width={1.500} height={1.500} />
          <rect x={2} y={10} width={1.500} height={1.500} />
          <rect x={6} y={10} width={1.500} height={1.500} />
          <rect x={10} y={10} width={1.500} height={1.500} />
        </g>
      </svg>

      {/* dialog */}
      <div className="absolute left-[457px] top-[351px] w-[346px] h-[184px] bg-[#f0f0f0] border border-[#6e6e6e] shadow-[0_4px_18px_rgba(0,0,0,0.35)] flex flex-col">
        <div className="h-[44px] bg-white flex items-center pl-[11px] pr-[16px]">
          <QgisLogo s={24} />
          <span className="ml-[5px] text-[17.200px]">Create OGC API - Features</span>
          <svg width={16} height={16} viewBox="0 0 16 16" className="ml-auto"><path d="M0 0l16 16M16 0L0 16" stroke="#111" /></svg>
        </div>
        <div className="px-[17px] flex-1 flex flex-col">
          <div className="mt-[16px] text-[16px] tracking-[-0.25px] whitespace-nowrap">The number of objects returned by default</div>
          <div className="mt-[9px] h-[30px] w-[310px] border border-[#58a8f0] rounded-[3px] bg-white flex items-center">
            <span className="ml-[6px] bg-[#0078d7] text-white text-[16px] leading-[22px]">1000</span>
            <div className="ml-auto w-px h-[26px] bg-[#909090]" />
            <div className="w-[21px] flex flex-col items-center gap-[4px]">
              <svg width={12} height={7} viewBox="0 0 12 7"><path d="M0 7h12L6 0z" fill="#666" /></svg>
              <svg width={12} height={7} viewBox="0 0 12 7"><path d="M0 0h12L6 7z" fill="#666" /></svg>
            </div>
          </div>
          <div className="mt-[11px] flex justify-end gap-[9px] text-[16px]">
            <div className="w-[120px] h-[31px] rounded-[3px] border border-[#52a7f0] bg-gradient-to-b from-[#fbfbfb] to-[#e8e8e8] flex items-center justify-center">OK</div>
            <div className="w-[120px] h-[31px] rounded-[3px] border border-[#ababab] bg-gradient-to-b from-[#fbfbfb] to-[#e8e8e8] flex items-center justify-center">Cancel</div>
          </div>
        </div>
      </div>
    </div>
  );
}
